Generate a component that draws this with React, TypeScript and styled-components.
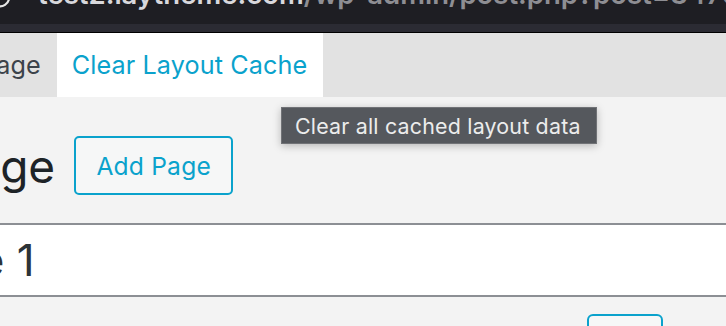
import React from "react";
import styled, { createGlobalStyle } from "styled-components";

const Global = createGlobalStyle`
  html, body { margin: 0; padding: 0; }
  body {
    width: 726px;
    height: 326px;
    overflow: hidden;
    background: #f3f3f3;
    font-family: Inter, "Noto Sans", "Liberation Sans", sans-serif;
  }
`;

const Page = styled.div`
  width: 726px;
  height: 326px;
  overflow: hidden;
  position: relative;
  background: #f3f3f3;
`;

const UrlBar = styled.div`
  height: 24px;
  background: #1e1e23;
  overflow: hidden;
  display: flex;
  align-items: flex-start;
`;

const ReloadIcon = styled.svg`
  flex: 0 0 auto;
  width: 14px;
  height: 10px;
`;

const UrlText = styled.div`
  margin-top: -19px;
  margin-left: 24px;
  font-size: 27.5px;
  line-height: 1;
  font-weight: 600;
  white-space: nowrap;
  color: #8e8e93;
`;

const Host = styled.span`
  color: #d8d8dc;
`;

const Strip = styled.div`
  height: 8px;
  background: #2b2b33;
  border-bottom: 1px solid #000;
`;

const TabBar = styled.div`
  height: 64px;
  background: #e2e2e2;
  display: flex;
  overflow: hidden;
`;

const Tab = styled.div<{ $active?: boolean; $shift?: number }>`
  display: flex;
  align-items: center;
  padding: 0 16px 0 15px;
  margin-left: ${(p) => (p.$shift ? `${-p.$shift}px` : "0")};
  background: ${(p) => (p.$active ? "#ffffff" : "transparent")};
  color: ${(p) => (p.$active ? "#0aa2cc" : "#3c434a")};
  font-size: 25.2px;
  letter-spacing: 0.1px;
  white-space: nowrap;
`;

const Content = styled.div`
  display: flex;
  flex-direction: column;
`;

const HeaderRow = styled.div`
  display: flex;
  align-items: center;
  margin-top: 39px;
  height: 59px;
`;

const Heading = styled.h1<{ $shift: number }>`
  margin: 0 0 0 ${(p) => -p.$shift}px;
  font-size: 46px;
  font-weight: 400;
  color: #1d2327;
  white-space: nowrap;
`;

const OutlineButton = styled.button`
  font-family: inherit;
  box-sizing: border-box;
  height: 59px;
  width: 159px;
  padding: 0;
  margin-left: 19px;
  border: 2px solid #0aa2cc;
  border-radius: 5px;
  background: #f6f7f7;
  color: #0aa2cc;
  font-size: 24.6px;
  letter-spacing: 0.2px;
`;

const TitleInput = styled.div`
  margin-top: 28px;
  box-sizing: border-box;
  height: 74px;
  background: #ffffff;
  border-top: 2px solid #8c8f94;
  border-bottom: 2px solid #8c8f94;
  display: flex;
  align-items: center;
  overflow: hidden;
`;

const TitleText = styled.div<{ $shift: number }>`
  margin-left: ${(p) => -p.$shift}px;
  font-size: 44px;
  color: #2c3338;
  white-space: nowrap;
`;

const BottomRow = styled.div`
  display: flex;
  justify-content: flex-end;
  padding-right: 63px;
  margin-top: 17px;
`;

const SmallButton = styled.div`
  width: 76px;
  height: 40px;
  box-sizing: border-box;
  border: 2px solid #0aa2cc;
  border-radius: 6px;
  background: #f6f7f7;
`;

const Tooltip = styled.div`
  position: absolute;
  left: 281px;
  top: 107px;
  box-sizing: border-box;
  width: 316px;
  height: 37px;
  padding: 0 0 0 13px;
  display: flex;
  align-items: center;
  background: #55585d;
  border: 1px solid #707276;
  color: #ececec;
  font-size: 21.4px;
  letter-spacing: 0.2px;
  white-space: nowrap;
  box-shadow: 0 2px 8px rgba(0, 0, 0, 0.25);
`;

export default function App() {
  return (
    <Page>
      <Global />
      <UrlBar>
        <ReloadIcon viewBox="0 0 14 10">
          <path d="M-2 6 A 9 9 0 0 0 9 -1" fill="none" stroke="#e6e6e6" strokeWidth="2.2" />
        </ReloadIcon>
        <UrlText>
          <Host>test2.laytheme.com</Host>/wp-admin/post.php?post=3470&amp;action=edit
        </UrlText>
      </UrlBar>
      <Strip />
      <TabBar>
        <Tab $shift={35}>Page</Tab>
        <Tab $active>Clear Layout Cache</Tab>
      </TabBar>
      <Content>
        <HeaderRow>
          <Heading $shift={150}>Edit Page</Heading>
          <OutlineButton>Add Page</OutlineButton>
        </HeaderRow>
        <TitleInput>
          <TitleText $shift={101}>Page 1</TitleText>
        </TitleInput>
        <BottomRow>
          <SmallButton />
        </BottomRow>
      </Content>
      <Tooltip>Clear all cached layout data</Tooltip>
    </Page>
  );
}
